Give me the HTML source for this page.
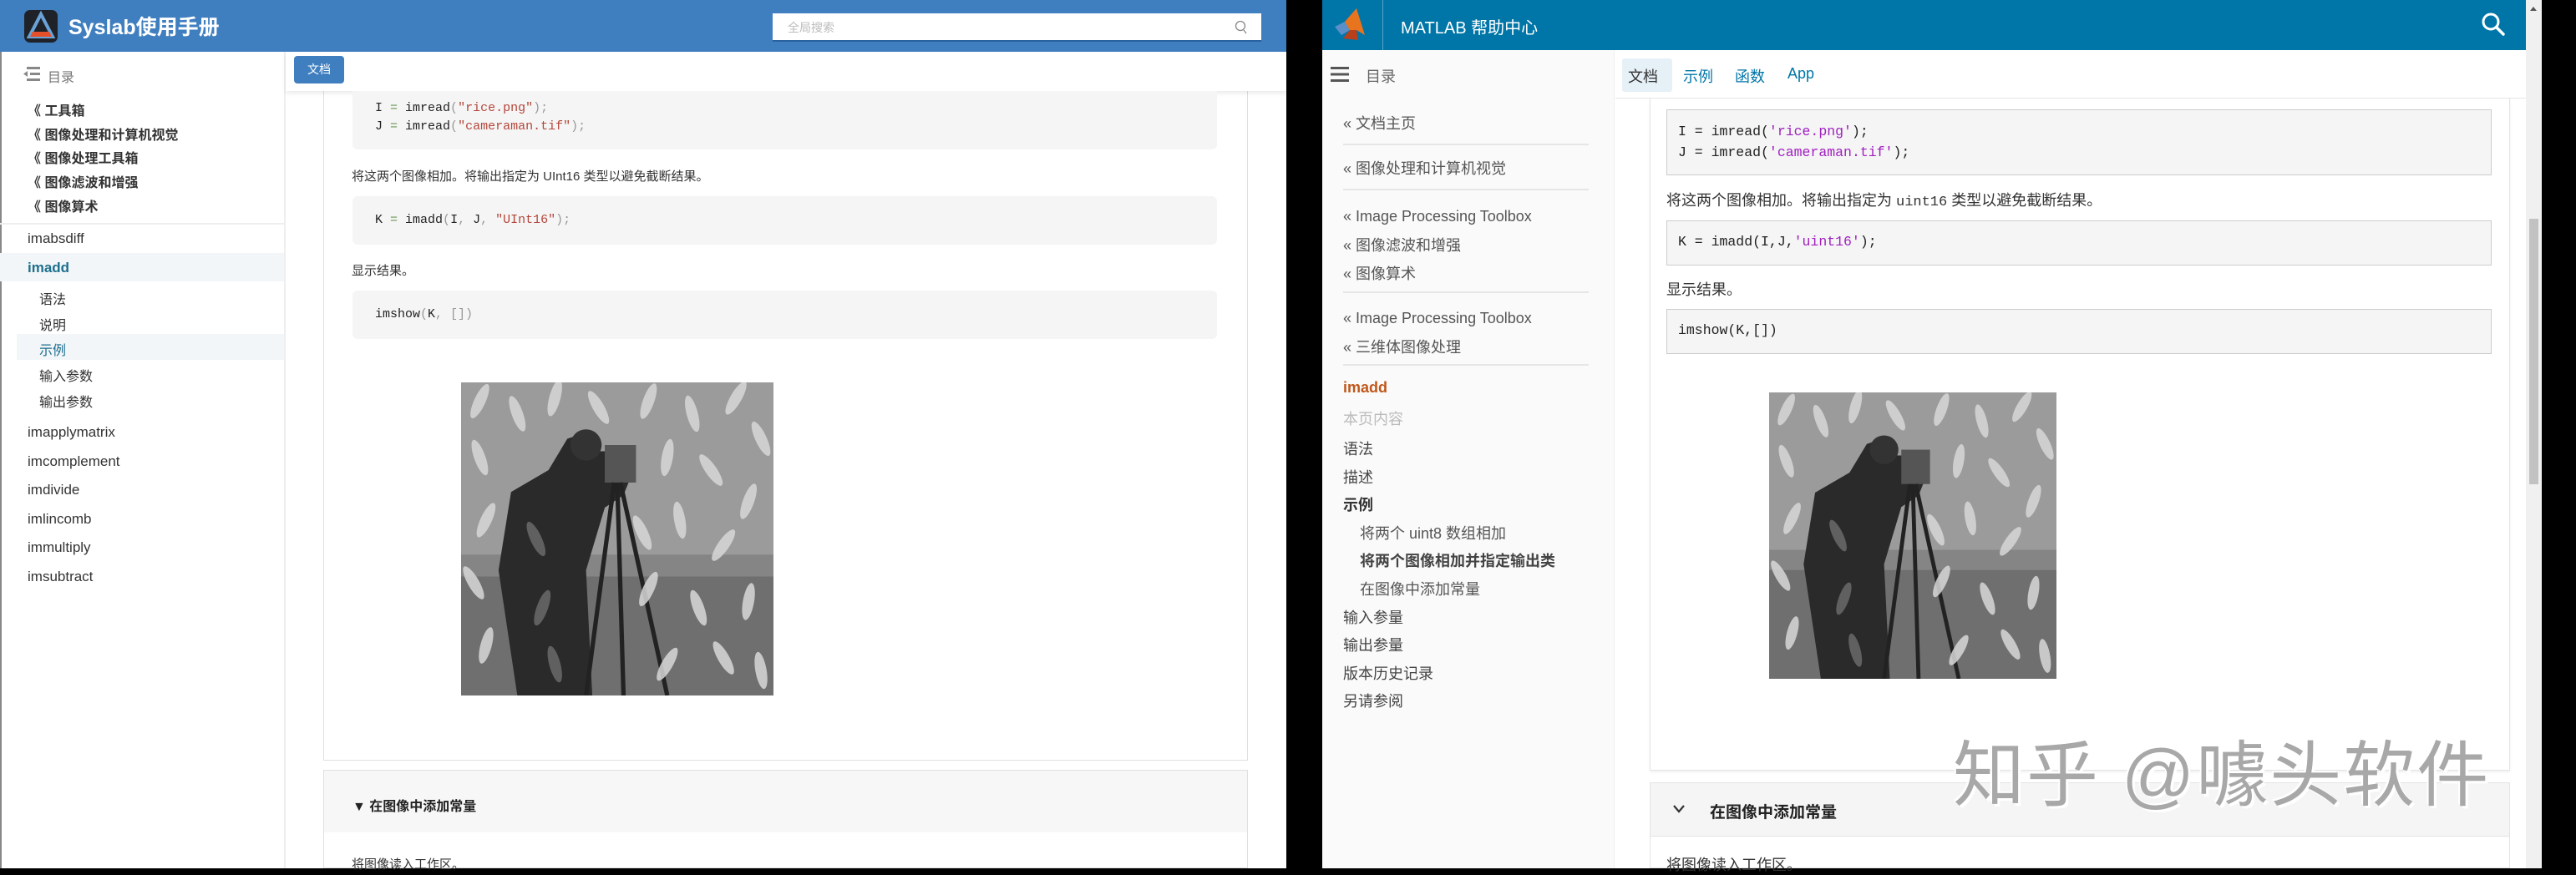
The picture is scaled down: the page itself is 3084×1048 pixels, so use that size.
<!DOCTYPE html>
<html><head><meta charset="utf-8">
<style>
*{margin:0;padding:0;box-sizing:border-box}
body{width:3084px;height:1040px;background:#000;position:relative;overflow:hidden;font-family:"Liberation Sans","Noto Sans CJK SC",sans-serif;}
.a{position:absolute;white-space:nowrap}
.mono{font-family:"Liberation Mono","Noto Sans CJK SC",monospace}
</style></head><body>
<svg width="0" height="0" style="position:absolute">
<defs>
<symbol id="cam" viewBox="0 0 100 100" preserveAspectRatio="none">
<rect width="100" height="100" fill="#8e8e8e"/>
<rect y="0" width="100" height="55" fill="#9b9b9b"/>
<rect y="62" width="100" height="38" fill="#6f6f6f"/>
<rect y="55" width="100" height="7" fill="#858585"/>
<path d="M18 100 L12 60 L16 35 L28 28 L34 18 L40 16 L44 22 L50 22 L56 26 L52 36 L46 40 L40 60 L42 100 Z" fill="#2a2a2a"/>
<circle cx="40" cy="20" r="5" fill="#333"/>
<rect x="46" y="20" width="10" height="12" fill="#555"/>
<path d="M49 32 L40 100 M50 32 L52 100 M51 32 L66 100" stroke="#222" stroke-width="1.4" fill="none"/>
<g fill="#d8d8d8" opacity="0.85">
<ellipse cx="6" cy="6" rx="1.8" ry="6" transform="rotate(25 6 6)"/>
<ellipse cx="18" cy="10" rx="1.8" ry="6" transform="rotate(-20 18 10)"/>
<ellipse cx="30" cy="5" rx="1.8" ry="6" transform="rotate(15 30 5)"/>
<ellipse cx="44" cy="8" rx="1.8" ry="6" transform="rotate(-30 44 8)"/>
<ellipse cx="60" cy="6" rx="1.8" ry="6" transform="rotate(20 60 6)"/>
<ellipse cx="74" cy="10" rx="1.8" ry="6" transform="rotate(-15 74 10)"/>
<ellipse cx="88" cy="5" rx="1.8" ry="6" transform="rotate(30 88 5)"/>
<ellipse cx="96" cy="18" rx="1.8" ry="6" transform="rotate(-25 96 18)"/>
<ellipse cx="66" cy="24" rx="1.8" ry="6" transform="rotate(10 66 24)"/>
<ellipse cx="80" cy="28" rx="1.8" ry="6" transform="rotate(-35 80 28)"/>
<ellipse cx="92" cy="38" rx="1.8" ry="6" transform="rotate(20 92 38)"/>
<ellipse cx="70" cy="44" rx="1.8" ry="6" transform="rotate(-10 70 44)"/>
<ellipse cx="84" cy="52" rx="1.8" ry="6" transform="rotate(35 84 52)"/>
<ellipse cx="6" cy="24" rx="1.8" ry="6" transform="rotate(-20 6 24)"/>
<ellipse cx="8" cy="44" rx="1.8" ry="6" transform="rotate(25 8 44)"/>
<ellipse cx="4" cy="64" rx="1.8" ry="6" transform="rotate(-30 4 64)"/>
<ellipse cx="8" cy="84" rx="1.8" ry="6" transform="rotate(15 8 84)"/>
<ellipse cx="24" cy="50" rx="1.8" ry="6" transform="rotate(-25 24 50)" fill="#6a6a6a"/>
<ellipse cx="26" cy="72" rx="1.8" ry="6" transform="rotate(20 26 72)" fill="#6a6a6a"/>
<ellipse cx="30" cy="90" rx="1.8" ry="6" transform="rotate(-15 30 90)" fill="#6a6a6a"/>
<ellipse cx="60" cy="66" rx="1.8" ry="6" transform="rotate(25 60 66)"/>
<ellipse cx="76" cy="72" rx="1.8" ry="6" transform="rotate(-20 76 72)"/>
<ellipse cx="92" cy="70" rx="1.8" ry="6" transform="rotate(10 92 70)"/>
<ellipse cx="84" cy="88" rx="1.8" ry="6" transform="rotate(-30 84 88)"/>
<ellipse cx="66" cy="90" rx="1.8" ry="6" transform="rotate(30 66 90)"/>
<ellipse cx="96" cy="92" rx="1.8" ry="6" transform="rotate(-10 96 92)"/>
<ellipse cx="58" cy="48" rx="1.8" ry="6" transform="rotate(-25 58 48)"/>
</g>
</symbol>
</defs></svg>

<!-- LEFT PANEL -->
<div class="a" style="left:0;top:0;width:1540px;height:1040px;background:#fff;border-left:2px solid #888"></div>
<div class="a" style="left:0;top:0;width:1540px;height:62px;background:#3f7ebf"></div>
<svg class="a" style="left:29px;top:12px" width="40" height="39" viewBox="0 0 40 39">
<rect width="40" height="39" rx="7" fill="#1f2329"/>
<path d="M20 5 L34 32 L6 32 Z" fill="none" stroke="#6aa3d8" stroke-width="4"/>
<path d="M10 26 L30 26 L33 32 L7 32 Z" fill="#e4502a"/>
</svg>
<div class="a" style="left:82px;top:13px;color:#fff;font-size:25px;font-weight:bold">Syslab使用手册</div>
<div class="a" style="left:925px;top:16px;width:585px;height:34px;background:#fff;border-bottom:2px solid #2a62a0"></div>
<div class="a" style="left:943px;top:23px;color:#bbb;font-size:14px">全局搜索</div>
<svg class="a" style="left:1478px;top:24px" width="16" height="18" viewBox="0 0 16 18"><circle cx="7" cy="7" r="5.5" fill="none" stroke="#888" stroke-width="1.3"/><path d="M11 12 L14 16" stroke="#888" stroke-width="1.3"/></svg>

<!-- left sidebar -->
<div class="a" style="left:340px;top:62px;width:2px;height:978px;background:#eee"></div>
<svg class="a" style="left:28px;top:80px" width="20" height="17" viewBox="0 0 20 17"><g fill="#888"><rect x="4" y="0" width="16" height="3"/><rect x="8" y="7" width="12" height="3"/><rect x="4" y="14" width="16" height="3"/><path d="M0 8.5 L5 5 L5 12Z"/></g></svg>
<div class="a" style="left:57px;top:79px;color:#777;font-size:16px">目录</div>
<div class="a" style="left:33px;top:120px;font-size:16px;font-weight:bold;color:#333;line-height:28.7px">
<div>《 工具箱</div><div>《 图像处理和计算机视觉</div><div>《 图像处理工具箱</div><div>《 图像滤波和增强</div><div>《 图像算术</div></div>
<div class="a" style="left:0;top:267px;width:340px;height:2px;background:#eee"></div>
<div class="a" style="left:33px;top:276px;font-size:17px;color:#333">imabsdiff</div>
<div class="a" style="left:0;top:303px;width:340px;height:34px;background:#f3f6f8"></div>
<div class="a" style="left:33px;top:311px;font-size:17px;color:#1d6f8e;font-weight:bold">imadd</div>
<div class="a" style="left:47px;top:345px;font-size:16px;color:#333">语法</div>
<div class="a" style="left:47px;top:376px;font-size:16px;color:#333">说明</div>
<div class="a" style="left:20px;top:400px;width:320px;height:31px;background:#f3f6f8"></div>
<div class="a" style="left:47px;top:406px;font-size:16px;color:#1d6f8e">示例</div>
<div class="a" style="left:47px;top:437px;font-size:16px;color:#333">输入参数</div>
<div class="a" style="left:47px;top:468px;font-size:16px;color:#333">输出参数</div>
<div class="a" style="left:33px;top:501px;font-size:17px;color:#333;line-height:34.6px">
<div>imapplymatrix</div><div>imcomplement</div><div>imdivide</div><div>imlincomb</div><div>immultiply</div><div>imsubtract</div></div>

<!-- left content -->
<div class="a" style="left:387px;top:100px;width:1107px;height:811px;border:1px solid #e0e0e0;border-top:none;background:#fff"></div>
<div class="a" style="left:342px;top:62px;width:1198px;height:47px;background:#fff;box-shadow:0 3px 5px rgba(0,0,0,0.08)"></div>
<div class="a" style="left:352px;top:67px;width:60px;height:33px;background:#3f7ebf;border-radius:4px;color:#fff;font-size:14px;text-align:center;line-height:33px">文档</div>
<div class="a" style="left:422px;top:109px;width:1035px;height:70px;background:#f5f5f5;border-radius:0 0 6px 6px"></div>
<div class="a mono" style="left:449px;top:119px;font-size:15px;line-height:22px;color:#222">
<div>I <span style="color:#6a9955">=</span> imread<span style="color:#999">(</span><span style="color:#b4463a">"rice.png"</span><span style="color:#999">);</span></div>
<div>J <span style="color:#6a9955">=</span> imread<span style="color:#999">(</span><span style="color:#b4463a">"cameraman.tif"</span><span style="color:#999">);</span></div></div>
<div class="a" style="left:421px;top:200px;font-size:15px;color:#333">将这两个图像相加。将输出指定为 UInt16 类型以避免截断结果。</div>
<div class="a" style="left:422px;top:235px;width:1035px;height:58px;background:#f5f5f5;border-radius:6px"></div>
<div class="a mono" style="left:449px;top:255px;font-size:15px;color:#222">K <span style="color:#6a9955">=</span> imadd<span style="color:#999">(</span>I<span style="color:#999">,</span> J<span style="color:#999">,</span> <span style="color:#b4463a">"UInt16"</span><span style="color:#999">);</span></div>
<div class="a" style="left:421px;top:313px;font-size:15px;color:#333">显示结果。</div>
<div class="a" style="left:422px;top:348px;width:1035px;height:58px;background:#f5f5f5;border-radius:6px"></div>
<div class="a mono" style="left:449px;top:368px;font-size:15px;color:#222">imshow<span style="color:#999">(</span>K<span style="color:#999">, [])</span></div>
<svg class="a" style="left:552px;top:458px" width="374" height="375"><use href="#cam" width="374" height="375"/></svg>
<div class="a" style="left:387px;top:922px;width:1107px;height:118px;border:1px solid #e0e0e0;background:#fff"></div>
<div class="a" style="left:388px;top:923px;width:1105px;height:74px;background:#f7f7f7"></div>
<div class="a" style="left:422px;top:952px;font-size:16px;font-weight:bold;color:#222">▼ 在图像中添加常量</div>
<div class="a" style="left:421px;top:1024px;font-size:15px;color:#333">将图像读入工作区。</div>

<!-- RIGHT PANEL -->
<div class="a" style="left:1583px;top:0;width:1441px;height:1040px;background:#fff"></div>
<div class="a" style="left:1583px;top:0;width:1441px;height:60px;background:#0076a8"></div>
<svg class="a" style="left:1594px;top:8px" width="48" height="42" viewBox="0 0 48 42">
<path d="M4 24 L16 18 L22 28 L12 34 Z" fill="#5b8fc7"/>
<path d="M16 18 L30 2 L40 34 L30 28 L22 28 Z" fill="#e8741e"/>
<path d="M22 28 L30 28 L32 40 L14 38 Z" fill="#b8401a"/>
</svg>
<div class="a" style="left:1655px;top:0;width:1px;height:60px;background:#5aa3c7"></div>
<div class="a" style="left:1677px;top:17px;color:#fff;font-size:20px">MATLAB 帮助中心</div>
<svg class="a" style="left:2969px;top:13px" width="32" height="32" viewBox="0 0 32 32"><circle cx="13" cy="13" r="9" fill="none" stroke="#fff" stroke-width="3"/><path d="M19.5 19.5 L28 28" stroke="#fff" stroke-width="3.5" stroke-linecap="round"/></svg>
<!-- scrollbar -->
<div class="a" style="left:3024px;top:0;width:19px;height:1040px;background:#f0f0f0"></div>
<div class="a" style="left:3028px;top:262px;width:11px;height:318px;background:#c2c2c2"></div>
<div class="a" style="left:3029px;top:8px;width:0;height:0;border-left:4px solid transparent;border-right:4px solid transparent;border-bottom:5px solid #555"></div>
<!-- right sidebar -->
<div class="a" style="left:1583px;top:60px;width:350px;height:980px;background:#fafafa;border-right:1px solid #eee"></div>
<svg class="a" style="left:1593px;top:80px" width="22" height="18" viewBox="0 0 22 18"><g fill="#555"><rect y="0" width="22" height="3"/><rect y="7.5" width="22" height="3"/><rect y="15" width="22" height="3"/></g></svg>
<div class="a" style="left:1635px;top:78px;color:#666;font-size:18px">目录</div>
<div class="a" style="left:1608px;font-size:18px;color:#555;top:134px">« 文档主页</div>
<div class="a" style="left:1608px;top:172px;width:294px;height:2px;background:#e6e6e6"></div>
<div class="a" style="left:1608px;font-size:18px;color:#555;top:188px">« 图像处理和计算机视觉</div>
<div class="a" style="left:1608px;top:226px;width:294px;height:2px;background:#e6e6e6"></div>
<div class="a" style="left:1608px;font-size:18px;color:#555;top:242px;line-height:34.5px"><div>« Image Processing Toolbox</div><div>« 图像滤波和增强</div><div>« 图像算术</div></div>
<div class="a" style="left:1608px;top:349px;width:294px;height:2px;background:#e6e6e6"></div>
<div class="a" style="left:1608px;font-size:18px;color:#555;top:364px;line-height:34.5px"><div>« Image Processing Toolbox</div><div>« 三维体图像处理</div></div>
<div class="a" style="left:1608px;top:436px;width:294px;height:2px;background:#e6e6e6"></div>
<div class="a" style="left:1608px;top:454px;font-size:18px;font-weight:bold;color:#c0571a">imadd</div>
<div class="a" style="left:1608px;top:488px;font-size:18px;color:#bbb">本页内容</div>
<div class="a" style="left:1608px;top:522px;font-size:18px;color:#444;line-height:33.6px">
<div>语法</div><div>描述</div><div style="font-weight:bold;color:#333">示例</div>
<div style="padding-left:20px;color:#555">将两个 uint8 数组相加</div>
<div style="padding-left:20px;font-weight:bold;color:#444">将两个图像相加并指定输出类</div>
<div style="padding-left:20px;color:#555">在图像中添加常量</div>
<div>输入参量</div><div>输出参量</div><div>版本历史记录</div><div>另请参阅</div></div>
<!-- right tabs -->
<div class="a" style="left:1934px;top:117px;width:1090px;height:1px;background:#e6e6e6"></div>
<div class="a" style="left:1942px;top:70px;width:60px;height:40px;background:#e6f0f7;border-radius:3px"></div>
<div class="a" style="left:1949px;top:78px;font-size:18px;color:#333">文档</div>
<div class="a" style="left:2015px;top:78px;font-size:18px;color:#0076a8">示例</div>
<div class="a" style="left:2077px;top:78px;font-size:18px;color:#0076a8">函数</div>
<div class="a" style="left:2140px;top:78px;font-size:18px;color:#0076a8">App</div>
<!-- right content -->
<div class="a" style="left:1975px;top:118px;width:1030px;height:805px;border:1px solid #e4e4e4;border-top:none;box-shadow:0 2px 3px rgba(0,0,0,0.06)"></div>
<div class="a" style="left:1995px;top:131px;width:988px;height:79px;background:#f5f5f5;border:1px solid #ccc"></div>
<div class="a mono" style="left:2009px;top:145px;font-size:16.5px;line-height:25px;color:#222">
<div>I = imread(<span style="color:#a020c0">'rice.png'</span>);</div>
<div>J = imread(<span style="color:#a020c0">'cameraman.tif'</span>);</div></div>
<div class="a" style="left:1995px;top:226px;font-size:18px;color:#333">将这两个图像相加。将输出指定为 <span class="mono" style="font-size:17px">uint16</span> 类型以避免截断结果。</div>
<div class="a" style="left:1995px;top:264px;width:988px;height:54px;background:#f5f5f5;border:1px solid #ccc"></div>
<div class="a mono" style="left:2009px;top:280px;font-size:16.5px;color:#222">K = imadd(I,J,<span style="color:#a020c0">'uint16'</span>);</div>
<div class="a" style="left:1995px;top:333px;font-size:18px;color:#333">显示结果。</div>
<div class="a" style="left:1995px;top:370px;width:988px;height:54px;background:#f5f5f5;border:1px solid #ccc"></div>
<div class="a mono" style="left:2009px;top:386px;font-size:16.5px;color:#222">imshow(K,[])</div>
<svg class="a" style="left:2118px;top:470px" width="344" height="343"><use href="#cam" width="344" height="343"/></svg>
<div class="a" style="left:1975px;top:937px;width:1030px;height:103px;border:1px solid #e4e4e4;background:#fff"></div>
<div class="a" style="left:1976px;top:938px;width:1028px;height:64px;background:#f5f5f5;border-bottom:1px solid #e4e4e4"></div>
<svg class="a" style="left:2002px;top:963px" width="16" height="12" viewBox="0 0 16 12"><path d="M2 2 L8 9 L14 2" fill="none" stroke="#333" stroke-width="2.2"/></svg>
<div class="a" style="left:2047px;top:958px;font-size:19px;font-weight:bold;color:#222">在图像中添加常量</div>
<div class="a" style="left:1995px;top:1022px;font-size:18px;color:#333">将图像读入工作区。</div>
<!-- watermark -->
<div class="a" style="left:2338px;top:858px;font-size:86px;color:#a8a8a8;text-shadow:3px 3px 0 #fff,-2px -2px 0 #fff;letter-spacing:2px">知乎 @噱头软件</div>
</body></html>
